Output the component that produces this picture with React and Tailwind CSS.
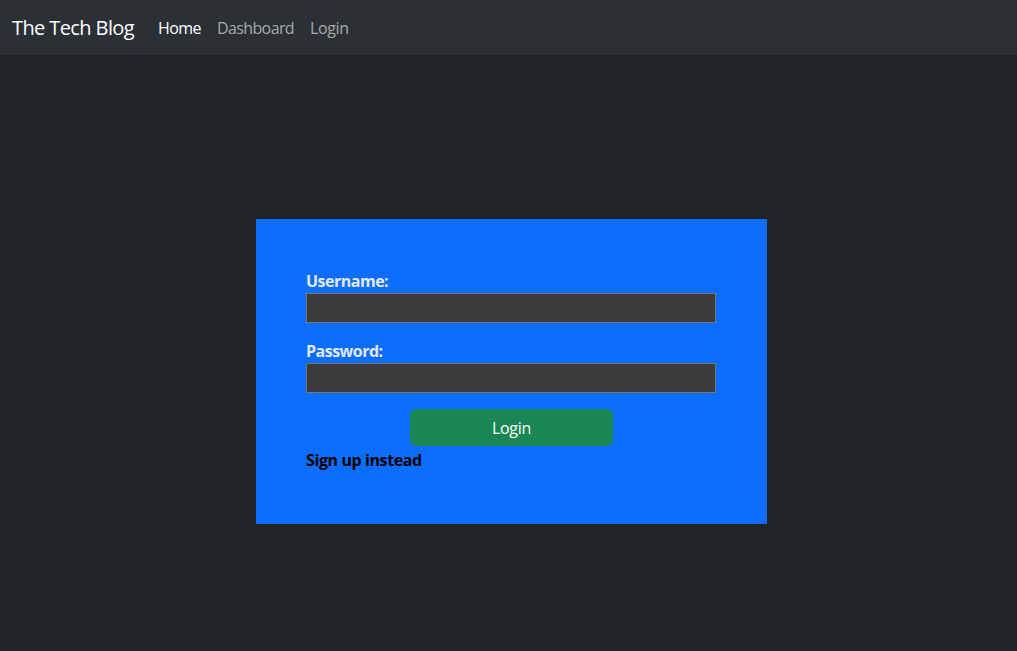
import React from 'react';

function App() {
    return (
        <div className="min-h-[651px] bg-[#212529] font-['Open_Sans',sans-serif]">
            {/* barra de navegación */}
            <nav className="h-[55px] bg-[#2b3035] flex items-center px-3">
                <a className="text-[20px] text-white mr-4 tracking-[-0.6px]">The Tech Blog</a>
                <a className="px-2 text-[16px] text-white tracking-[-0.6px]">Home</a>
                <a className="px-2 text-[16px] text-[#a7a9ab] tracking-[-0.6px]">Dashboard</a>
                <a className="px-2 text-[16px] text-[#a7a9ab] tracking-[-0.4px]">Login</a>
            </nav>

            <main className="flex justify-center pt-[164px] pl-[6px]">
                <div className="w-[511px] bg-[#0d6efd] px-[50px] pt-[50px] pb-[52px]">
                    <form className="flex flex-col" onSubmit={e => e.preventDefault()}>
                        <label className="text-[16px] leading-[24px] font-bold text-[#e3e8ef] tracking-[-0.5px]">Username:</label>
                        <input type="text" className="h-[30px] w-[410px] bg-[#3c3c3c] border border-[#767676] outline-none" />
                        <label className="mt-4 text-[16px] leading-[24px] font-bold text-[#e3e8ef] tracking-[-0.5px]">Password:</label>
                        <input type="password" className="h-[30px] w-[410px] bg-[#3c3c3c] border border-[#767676] outline-none" />
                        <div className="flex justify-center mt-4">
                            <button type="submit" className="w-[203px] h-[37px] bg-[#198754] rounded-md text-white text-[16px] tracking-[-0.3px]">Login</button>
                        </div>
                        <a className="mt-[2px] text-[16px] leading-[24px] font-bold text-black tracking-[-0.4px]">Sign up instead</a>
                    </form>
                </div>
            </main>
        </div>
    );
}

export default App;
